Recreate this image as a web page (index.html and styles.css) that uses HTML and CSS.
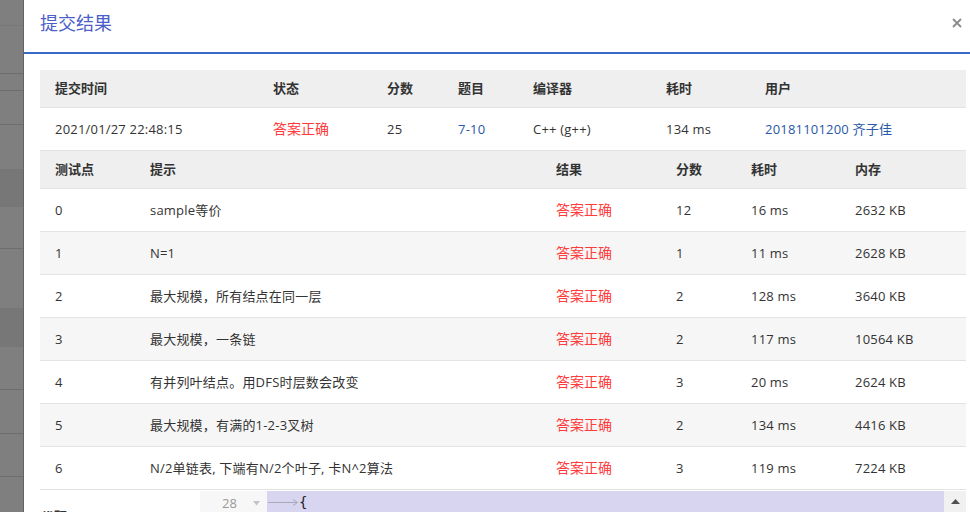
FILE: index.html
```html
<!DOCTYPE html>
<html lang="zh-CN">
<head>
<meta charset="utf-8">
<title>提交结果</title>
<link rel="stylesheet" href="styles.css">
</head>
<body>
<div class="screen">
  <div class="backdrop">
    <div class="band"></div><div class="band"></div><div class="band"></div><div class="band"></div>
    <div class="band"></div><div class="band"></div><div class="band"></div><div class="band"></div>
    <div class="band"></div><div class="band"></div><div class="band"></div><div class="band"></div>
    <div class="band"></div>
  </div>
  <div class="modal">
    <div class="modal-header">
      <h4 class="modal-title">提交结果</h4>
      <svg class="close" width="10" height="10" viewBox="0 0 10 10"><path d="M1 1L9 9M9 1L1 9" stroke="#8a8a8a" stroke-width="1.8" fill="none"/></svg>
    </div>
    <div class="modal-body">
      <table class="grid summary">
        <colgroup><col class="c218"><col class="c114"><col class="c71"><col class="c75"><col class="c133"><col class="c99"><col class="c216"></colgroup>
        <thead><tr><th>提交时间</th><th>状态</th><th>分数</th><th>题目</th><th>编译器</th><th>耗时</th><th>用户</th></tr></thead>
        <tbody><tr><td>2021/01/27 22:48:15</td><td class="ok">答案正确</td><td>25</td><td class="lnk">7-10</td><td>C++ (g++)</td><td>134 ms</td><td class="lnk">20181101200 齐子佳</td></tr></tbody>
      </table>
      <table class="grid cases">
        <colgroup><col class="c95"><col class="c406"><col class="c120"><col class="c75"><col class="c104"><col class="c126"></colgroup>
        <thead><tr><th>测试点</th><th>提示</th><th>结果</th><th>分数</th><th>耗时</th><th>内存</th></tr></thead>
        <tbody>
          <tr><td>0</td><td>sample等价</td><td class="ok">答案正确</td><td>12</td><td>16 ms</td><td>2632 KB</td></tr>
          <tr><td>1</td><td>N=1</td><td class="ok">答案正确</td><td>1</td><td>11 ms</td><td>2628 KB</td></tr>
          <tr><td>2</td><td>最大规模，所有结点在同一层</td><td class="ok">答案正确</td><td>2</td><td>128 ms</td><td>3640 KB</td></tr>
          <tr><td>3</td><td>最大规模，一条链</td><td class="ok">答案正确</td><td>2</td><td>117 ms</td><td>10564 KB</td></tr>
          <tr><td>4</td><td>有并列叶结点。用DFS时层数会改变</td><td class="ok">答案正确</td><td>3</td><td>20 ms</td><td>2624 KB</td></tr>
          <tr><td>5</td><td>最大规模，有满的1-2-3叉树</td><td class="ok">答案正确</td><td>2</td><td>134 ms</td><td>4416 KB</td></tr>
          <tr><td>6</td><td>N/2单链表, 下端有N/2个叶子, 卡N^2算法</td><td class="ok">答案正确</td><td>3</td><td>119 ms</td><td>7224 KB</td></tr>
        </tbody>
      </table>
      <div class="code-row">
        <div class="code-label">代码</div>
        <div class="editor">
          <div class="gutter"><span class="ln">28</span><svg class="fold" width="7" height="5" viewBox="0 0 7 5"><path d="M0 0H7L3.5 4.5Z" fill="#c4c4c4"/></svg></div>
          <div class="line">
            <svg class="tab" width="31" height="10" viewBox="0 0 31 10"><path d="M0 5.5H29M25 2.5L29.5 5.5L25 8.5" stroke="#a9a9b8" stroke-width="1" fill="none"/></svg>
            <span class="code">{</span>
          </div>
          <div class="vscroll"><svg class="up" width="9" height="5" viewBox="0 0 9 5"><path d="M0 5L4.5 0L9 5Z" fill="#505050"/></svg></div>
        </div>
      </div>
    </div>
  </div>
</div>
</body>
</html>
```
FILE: styles.css
```css
html, body {
  margin: 0;
  height: 512px;
  overflow: hidden;
}
body {
  font-family: "Open Sans", "Noto Sans CJK SC", sans-serif;
  font-size: 13px;
  color: #333;
  background: #fff;
}
.screen {
  display: flex;
  width: 982px;
  height: 512px;
}
.backdrop {
  flex: none;
  width: 23px;
  border-right: 1px solid #636363;
  background: #7f7f7f;
  display: flex;
  flex-direction: column;
}
.band { flex: none; }
.band:nth-child(1) { height: 25px; border-bottom: 1px solid #787878; }
.band:nth-child(2) { height: 47px; border-bottom: 1px solid #6d6d6d; }
.band:nth-child(3) { height: 16px; border-bottom: 1px solid #6d6d6d; }
.band:nth-child(4) { height: 33px; border-bottom: 1px solid #6d6d6d; }
.band:nth-child(5) { height: 44px; }
.band:nth-child(6) { height: 38px; background: #777; }
.band:nth-child(7) { height: 41px; border-bottom: 1px solid #6d6d6d; }
.band:nth-child(8) { height: 59px; }
.band:nth-child(9) { height: 39px; background: #777; }
.band:nth-child(10) { height: 42px; border-bottom: 1px solid #6d6d6d; }
.band:nth-child(11) { height: 43px; border-bottom: 1px solid #6d6d6d; }
.band:nth-child(12) { height: 42px; border-bottom: 1px solid #6d6d6d; }
.band:nth-child(13) { flex: 1; }

.modal {
  flex: none;
  width: 958px;
  background: #fff;
}
.modal-header {
  height: 42px;
  padding: 10px 20px 0 16px;
  border-bottom: 2px solid #3a68c9;
  display: flex;
  justify-content: space-between;
  align-items: flex-start;
}
.modal-title {
  margin: 0;
  font-size: 18px;
  font-weight: normal;
  line-height: 26px;
  color: #4b5ec9;
}
.close { margin-top: 8px; }
.modal-body {
  padding: 16px 16px 0;
}
.grid {
  width: 926px;
  border-collapse: collapse;
  table-layout: fixed;
}
.grid th, .grid td {
  padding: 0 0 0 15px;
  text-align: left;
  border-bottom: 1px solid #e3e3e3;
  white-space: nowrap;
  overflow: hidden;
}
.grid th {
  line-height: 37px;
  background: #efefef;
  font-weight: bold;
  color: #333;
}
.grid td {
  line-height: 42px;
  letter-spacing: 0.2px;
}
.cases tbody tr:nth-child(even) td { background: #f6f6f6; }
.grid td.ok { color: #ff3b3b; font-size: 14px; letter-spacing: 0; }
.lnk { color: #2759a6; }

.c218 { width: 218px; } .c114 { width: 114px; } .c71 { width: 71px; }
.c75 { width: 75px; } .c133 { width: 133px; } .c99 { width: 99px; }
.c216 { width: 216px; } .c95 { width: 95px; } .c406 { width: 406px; }
.c120 { width: 120px; } .c104 { width: 104px; } .c126 { width: 126px; }

.code-row {
  display: flex;
  height: 40px;
}
.code-label {
  width: 160px;
  flex: none;
  padding-top: 17px;
  font-size: 14px;
  font-weight: bold;
  line-height: 20px;
}
.editor {
  display: flex;
  width: 766px;
  height: 40px;
  margin-top: 1px;
}
.gutter {
  flex: none;
  width: 67px;
  height: 24px;
  background: #f7f7f7;
  display: flex;
  align-items: center;
  padding-left: 22px;
  box-sizing: border-box;
}
.ln { color: #999; }
.fold { margin-left: 16px; }
.line {
  flex: 1;
  background: #d7d5f0;
  display: flex;
  align-items: flex-start;
  height: 40px;
}
.tab { margin-top: 6px; margin-left: 1px; }
.code {
  font-family: "DejaVu Sans Mono", monospace;
  font-size: 14px;
  line-height: 22px;
  color: #222;
  margin-left: 0;
}
.vscroll {
  flex: none;
  width: 22px;
  height: 40px;
  background: #f1f1f1;
  display: flex;
  justify-content: center;
  align-items: flex-start;
}
.up { margin-top: 8px; }
```
